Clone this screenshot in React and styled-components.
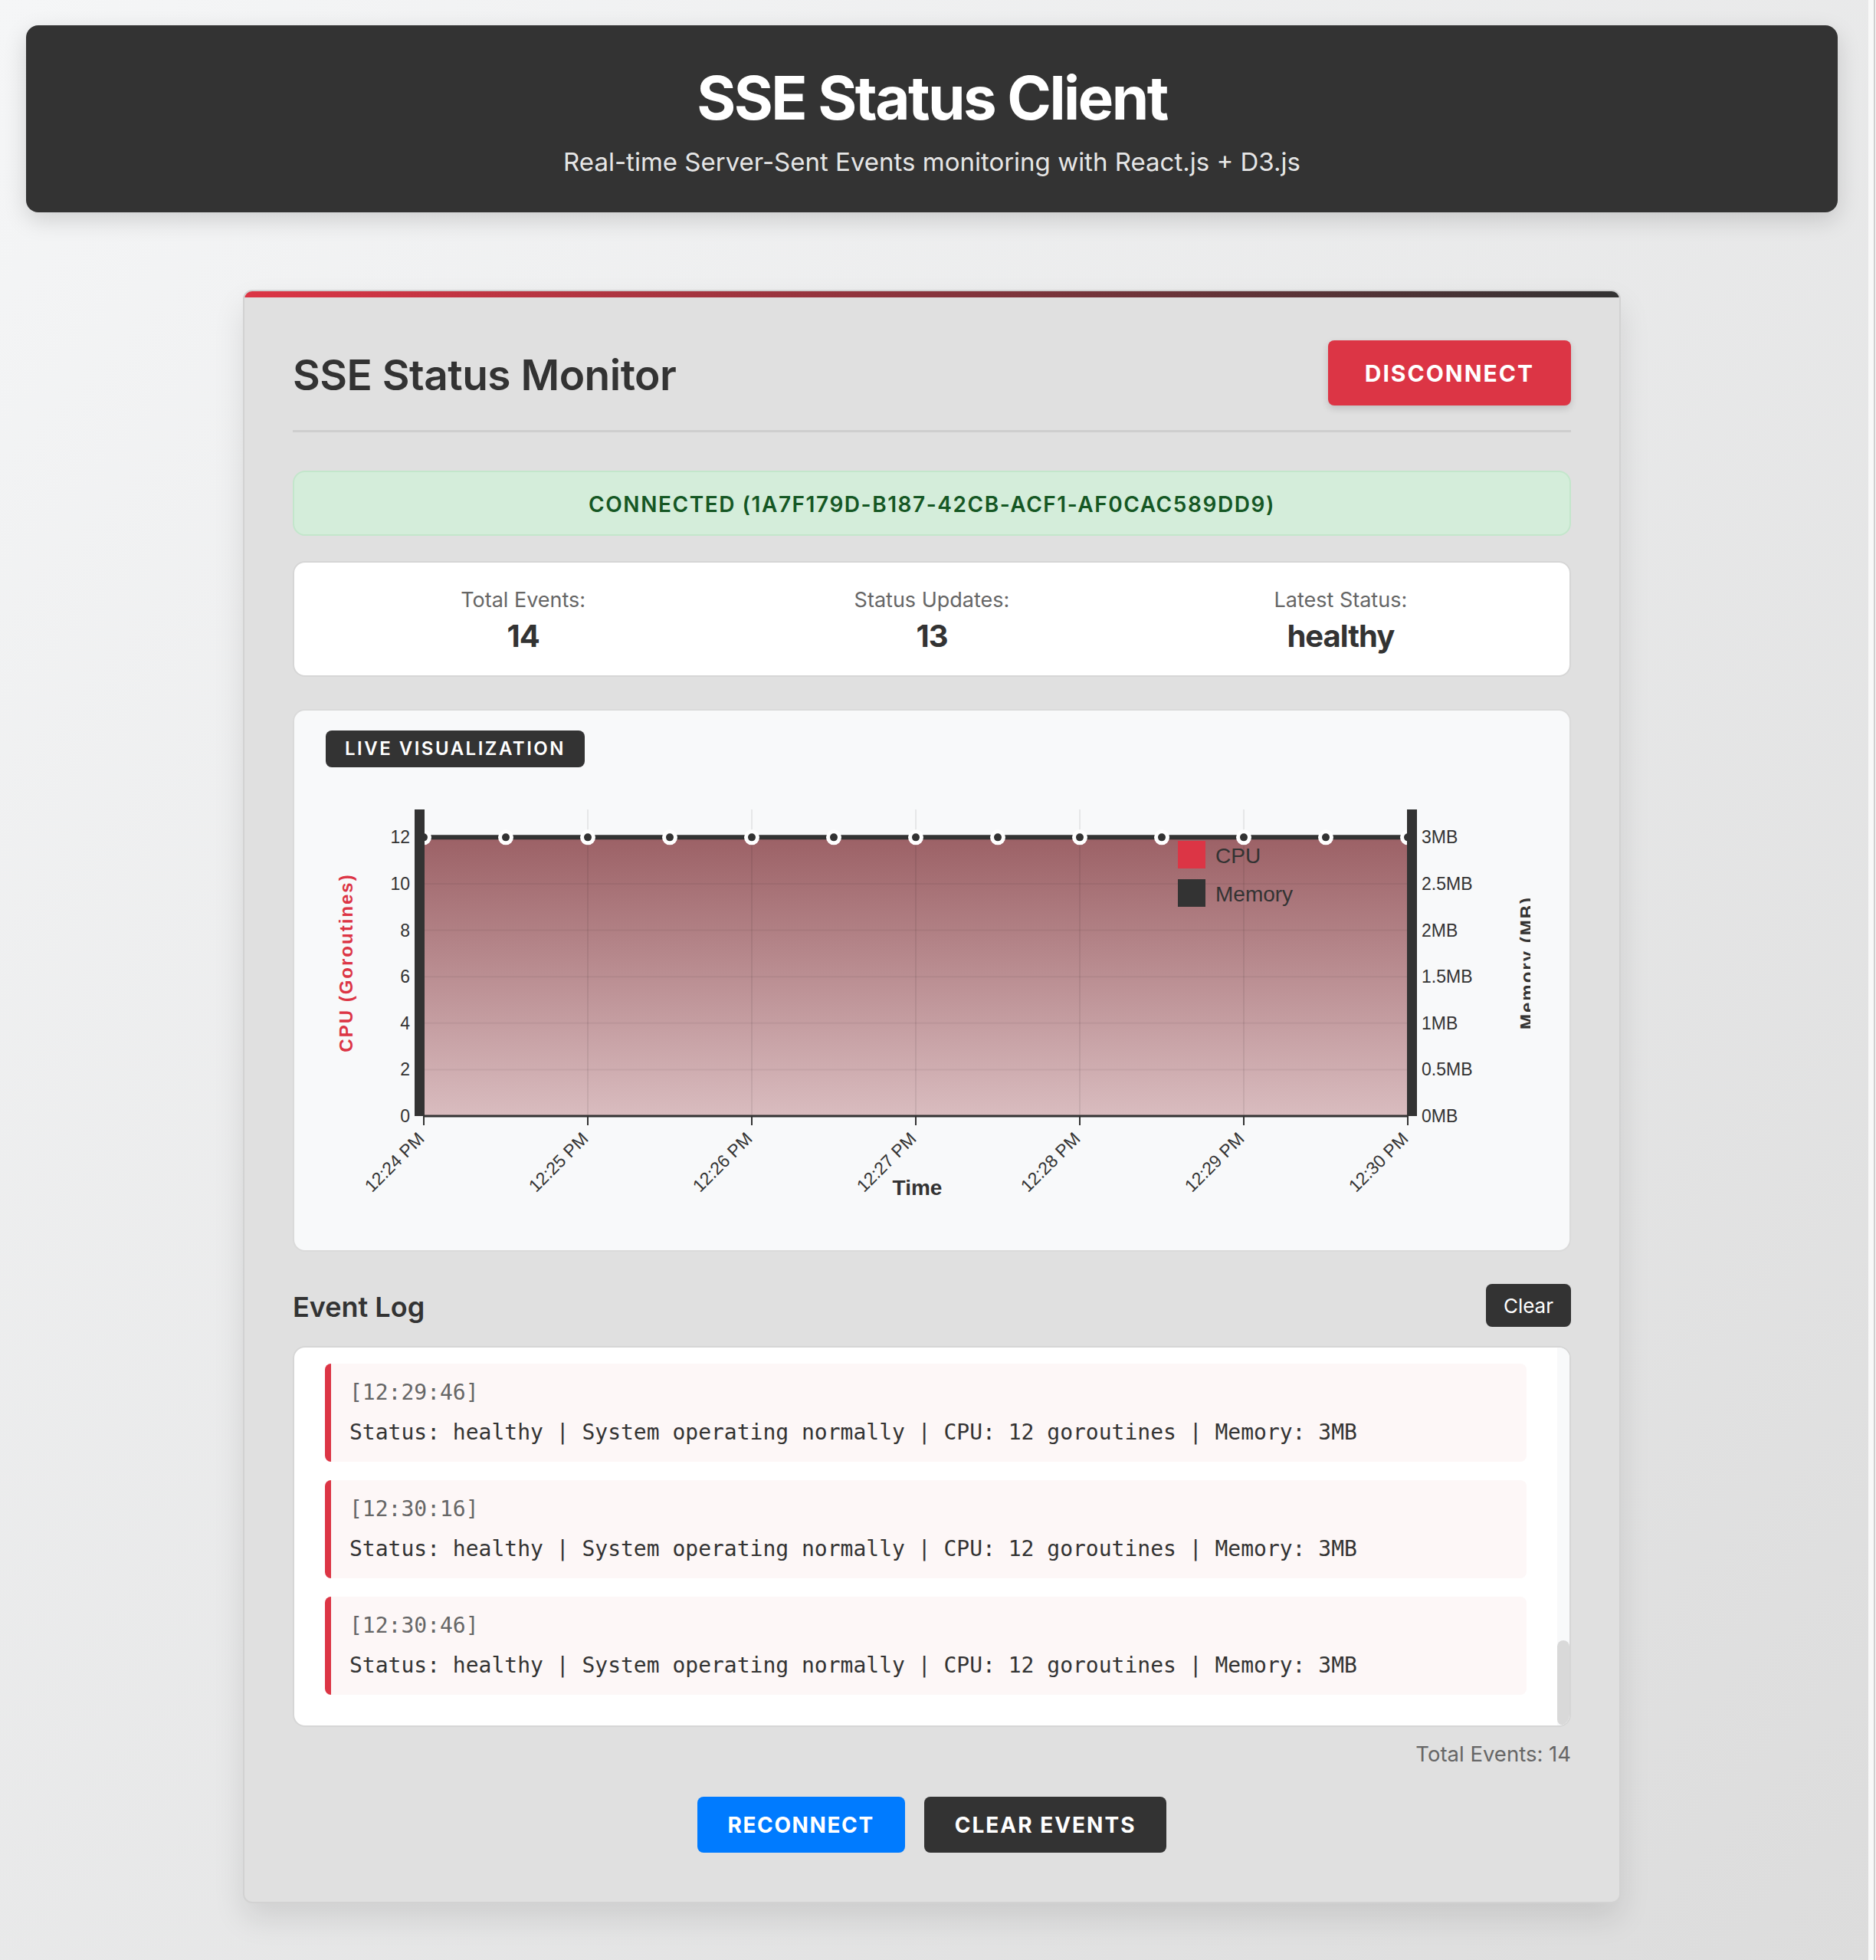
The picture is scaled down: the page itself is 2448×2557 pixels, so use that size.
import React, { useLayoutEffect, useRef, useState } from "react";
import styled, { createGlobalStyle } from "styled-components";

const GlobalStyle = createGlobalStyle`
  html, body { margin: 0; padding: 0; }
  body { font-family: Inter, "Noto Sans", "Liberation Sans", sans-serif; color: #333; }
  * { box-sizing: border-box; }
`;

const Shell = styled.div`
  display: flex;
  min-height: 100vh;
  background: linear-gradient(135deg, #f5f6f7 0%, #dcdcdc 100%);
`;

const Page = styled.div`
  flex: 1;
  padding: 33px 40px 40px 34px;
`;

const ScrollTrack = styled.div`
  width: 10px;
  background: linear-gradient(90deg, #f8f8f8 0 7px, #cfcfcf 7px 9px, #f8f8f8 9px);
`;

const Header = styled.header`
  background: #333;
  border-radius: 16px;
  padding: 47px 32px 42px;
  text-align: center;
  box-shadow: 0 10px 30px rgba(0, 0, 0, 0.15);
`;

const Title = styled.h1`
  margin: 0 0 11px;
  font-size: 78px;
  line-height: 96px;
  font-weight: 700;
  color: #fff;
  letter-spacing: -2.5px;
`;

const Subtitle = styled.p`
  margin: 0;
  font-size: 33px;
  line-height: 48px;
  color: rgba(255, 255, 255, 0.9);
`;

const Card = styled.main`
  width: 1798px;
  margin: 101px auto 0;
  border: 2px solid #d2d2d2;
  border-radius: 12px;
  background: linear-gradient(90deg, #dc3545, #333) top / 100% 8px no-repeat, #e0e0e0;
  padding: 64px 63px 64px;
  box-shadow: 0 20px 40px rgba(0, 0, 0, 0.1);
`;

const CardHeader = styled.div`
  display: flex;
  justify-content: space-between;
  align-items: center;
  padding-bottom: 32px;
  border-bottom: 3px solid #cecece;
  margin-bottom: 50px;
`;

const CardTitle = styled.h2`
  margin: 4px 0 0;
  font-size: 55px;
  line-height: 68px;
  font-weight: 600;
  letter-spacing: -0.5px;
  color: #333;
`;

const DisconnectButton = styled.button`
  height: 85px;
  padding: 0 48px;
  border: none;
  border-radius: 8px;
  background: #dc3545;
  color: #fff;
  font-family: inherit;
  font-size: 30px;
  font-weight: 700;
  letter-spacing: 2px;
  text-transform: uppercase;
  box-shadow: 0 4px 10px rgba(0, 0, 0, 0.15);
`;

const StatusBox = styled.div`
  height: 85px;
  display: flex;
  align-items: center;
  justify-content: center;
  padding-top: 3px;
  border: 2px solid #c3e6cb;
  background: #d4edda;
  border-radius: 16px;
  color: #155724;
  font-size: 28px;
  font-weight: 600;
  letter-spacing: 1.55px;
  text-transform: uppercase;
  margin-bottom: 33px;
`;

const Stats = styled.div`
  height: 151px;
  display: grid;
  grid-template-columns: repeat(3, 1fr);
  align-items: center;
  padding: 2px 32px 0;
  border: 2px solid #d6d6d6;
  background: #fff;
  border-radius: 16px;
  margin-bottom: 42px;
`;

const Stat = styled.div`
  text-align: center;
`;

const StatLabel = styled.div`
  font-size: 27px;
  line-height: 34px;
  color: #666;
`;

const StatValue = styled.div`
  margin-top: 8px;
  font-size: 40px;
  line-height: 44px;
  font-weight: 700;
  letter-spacing: -1px;
  color: #333;
`;

const ChartPanel = styled.section`
  border: 2px solid #dadada;
  border-radius: 16px;
  background: #f8f9fa;
  padding: 26px 39px 35px 41px;
  display: flex;
  flex-direction: column;
  align-items: flex-start;
`;

const Badge = styled.div`
  height: 48px;
  padding: 0 25px;
  background: #333;
  color: #fff;
  border-radius: 8px;
  font-size: 24px;
  line-height: 48px;
  font-weight: 600;
  letter-spacing: 2.5px;
  text-transform: uppercase;
`;

const ChartSvg = styled.svg`
  display: block;
  margin-top: 15px;
  overflow: hidden;
  font-family: "Liberation Sans", Arial, sans-serif;
`;

const LogHeader = styled.div`
  display: flex;
  justify-content: space-between;
  align-items: center;
  margin: 42px 0 25px;
`;

const LogTitle = styled.h3`
  margin: 4px 0 0;
  font-size: 36px;
  line-height: 44px;
  font-weight: 600;
  color: #333;
`;

const ClearButton = styled.button`
  height: 56px;
  padding: 0 23px;
  border: none;
  border-radius: 8px;
  background: #333;
  color: #fff;
  font-family: inherit;
  font-size: 26px;
`;

const LogFrame = styled.div`
  height: 497px;
  display: flex;
  overflow: hidden;
  border: 2px solid #d6d6d6;
  border-radius: 16px;
  background: #fff;
`;

const LogScroll = styled.div`
  flex: 1;
  overflow-y: auto;
  padding: 40px 40px 0;
  scrollbar-width: none;
  &::-webkit-scrollbar { display: none; }
`;

const ScrollRail = styled.div`
  width: 16px;
  flex: none;
  background: #f8f9fa;
  display: flex;
  flex-direction: column;
  justify-content: flex-end;
`;

const ScrollThumb = styled.div`
  border-radius: 8px;
  background: #d9d9d9;
`;

const LogInner = styled.div`
  padding-bottom: 40px;
`;

const Entry = styled.div`
  background: #fdf7f7;
  border-left: 8px solid #dc3545;
  border-radius: 8px;
  padding: 16px 24px;
  margin-bottom: 24px;
  font-family: "DejaVu Sans Mono", "Liberation Mono", monospace;
  font-size: 28px;
  line-height: 44px;

  &:last-child { margin-bottom: 0; }
`;

const EntryTime = styled.div`
  color: #666;
  margin-bottom: 8px;
`;

const EntryMsg = styled.div`
  color: #333;
  white-space: pre;
`;

const Footer = styled.div`
  margin-top: 16px;
  text-align: right;
  font-size: 27.5px;
  line-height: 39px;
  color: #666;
`;

const ButtonRow = styled.div`
  display: flex;
  justify-content: center;
  gap: 25px;
  margin-top: 36px;
`;

const ActionButton = styled.button`
  height: 73px;
  padding: 0 40px;
  border: none;
  border-radius: 8px;
  background: ${(p) => (p.$variant === "primary" ? "#007bff" : "#333")};
  color: #fff;
  font-family: inherit;
  font-size: 28px;
  font-weight: 700;
  letter-spacing: ${(p) => (p.$variant === "primary" ? "1.6px" : "2px")};
  text-transform: uppercase;
`;

function fmt(totalSec) {
  const h = Math.floor(totalSec / 3600);
  const m = Math.floor((totalSec % 3600) / 60);
  const s = totalSec % 60;
  const p = (n) => String(n).padStart(2, "0");
  return `${p(h)}:${p(m)}:${p(s)}`;
}

const STATUS_MSG =
  "Status: healthy | System operating normally | CPU: 12 goroutines | Memory: 3MB";

const events = [
  { time: "12:24:40", msg: "Connected | Client ID: 1A7F179D-B187-42CB-ACF1-AF0CAC589DD9" },
  ...Array.from({ length: 13 }, (_, i) => ({
    time: fmt(12 * 3600 + 24 * 60 + 46 + i * 30),
    msg: STATUS_MSG,
  })),
];

// chart geometry (svg local px)
const W = 1572;
const H = 580;
const PL = 128;
const PR = 1412;
const PT = 40;
const PB = 440;
const yOf = (v) => PB - (v * (PB - PT)) / 13.2;
const pointsX = Array.from({ length: 13 }, (_, i) => PL + (i * (PR - PL)) / 12);
const minuteX = Array.from({ length: 7 }, (_, i) => PL + (i * (PR - PL)) / 6);
const minuteLabels = ["12:24 PM", "12:25 PM", "12:26 PM", "12:27 PM", "12:28 PM", "12:29 PM", "12:30 PM"];
const yTicks = [0, 2, 4, 6, 8, 10, 12];
const memLabels = ["0MB", "0.5MB", "1MB", "1.5MB", "2MB", "2.5MB", "3MB"];

function Chart() {
  const top = yOf(12);
  return (
    <ChartSvg width={W} height={H} viewBox={`0 0 ${W} ${H}`}>
      <defs>
        <linearGradient id="areaGrad" x1="0" y1="0" x2="0" y2="1">
          <stop offset="0" stopColor="#9c6166" />
          <stop offset="1" stopColor="#d9bcbf" />
        </linearGradient>
      </defs>
      <path d={`M${PL},${PB}L${PL},${top}L${PR},${top}L${PR},${PB}Z`} fill="url(#areaGrad)" />
      {minuteX.map((x) => (
        <line key={`gx${x}`} x1={x} x2={x} y1={PT} y2={PB} stroke="#000" strokeOpacity="0.07" strokeWidth="2" />
      ))}
      {yTicks.map((v) => (
        <line key={`gy${v}`} x1={PL} x2={PR} y1={yOf(v)} y2={yOf(v)} stroke="#000" strokeOpacity="0.05" strokeWidth="2" />
      ))}
      <line x1={PL} x2={PR} y1={top} y2={top} stroke="#333" strokeWidth="6" />
      {pointsX.map((x) => (
        <circle key={`p${x}`} cx={x} cy={top} r="7.5" fill="#333" stroke="#fff" strokeWidth="5" />
      ))}
      <line x1={PL} x2={PR} y1={PB} y2={PB} stroke="#333" strokeWidth="3" />
      {minuteX.map((x) => (
        <line key={`t${x}`} x1={x} x2={x} y1={PB} y2={PB + 12} stroke="#333" strokeWidth="2" />
      ))}
      <rect x={PL - 12} y={PT} width="13" height={PB - PT} fill="#333" />
      <rect x={PR - 1} y={PT} width="13" height={PB - PT} fill="#333" />
      {yTicks.map((v) => (
        <text key={`yl${v}`} x={PL - 18} y={yOf(v)} dy="0.35em" textAnchor="end" fontSize="23" fill="#333">
          {v}
        </text>
      ))}
      {memLabels.map((l, i) => (
        <text key={`ml${l}`} x={PR + 18} y={yOf(i * 2)} dy="0.35em" fontSize="23" fill="#333">
          {l}
        </text>
      ))}
      {minuteX.map((x, i) => (
        <text
          key={`xl${x}`}
          transform={`translate(${x + 2},${PB + 31}) rotate(-45)`}
          textAnchor="end"
          fontSize="23"
          fill="#333"
        >
          {minuteLabels[i]}
        </text>
      ))}
      <text x={(PL + PR) / 2 + 2} y={543} textAnchor="middle" fontSize="28" fontWeight="700" fill="#333">
        Time
      </text>
      <text
        transform={`translate(35,${(PT + PB) / 2}) rotate(-90)`}
        textAnchor="middle"
        fontSize="24"
        fontWeight="700"
        letterSpacing="2"
        fill="#dc3545"
      >
        CPU (Goroutines)
      </text>
      <text
        transform={`translate(1576,${(PT + PB) / 2}) rotate(-90)`}
        textAnchor="middle"
        fontSize="24"
        fontWeight="700"
        letterSpacing="2"
        fill="#333"
      >
        Memory (MB)
      </text>
      <rect x="1112" y="81" width="36" height="36" fill="#dc3545" />
      <text x="1161" y="110" fontSize="28" fill="#333">CPU</text>
      <rect x="1112" y="131" width="36" height="36" fill="#333" />
      <text x="1161" y="160" fontSize="28" fill="#333">Memory</text>
    </ChartSvg>
  );
}

export default function App() {
  const listRef = useRef(null);
  const [thumb, setThumb] = useState(111);

  useLayoutEffect(() => {
    const el = listRef.current;
    if (!el) return;
    el.scrollTop = el.scrollHeight;
    const h = el.clientHeight;
    setThumb(Math.round((h * h) / el.scrollHeight));
  }, []);

  return (
    <>
      <GlobalStyle />
      <Shell>
        <Page>
          <Header>
            <Title>SSE Status Client</Title>
            <Subtitle>Real-time Server-Sent Events monitoring with React.js + D3.js</Subtitle>
          </Header>
          <Card>
            <CardHeader>
              <CardTitle>SSE Status Monitor</CardTitle>
              <DisconnectButton>Disconnect</DisconnectButton>
            </CardHeader>
            <StatusBox>Connected (1A7F179D-B187-42CB-ACF1-AF0CAC589DD9)</StatusBox>
            <Stats>
              <Stat>
                <StatLabel>Total Events:</StatLabel>
                <StatValue>14</StatValue>
              </Stat>
              <Stat>
                <StatLabel>Status Updates:</StatLabel>
                <StatValue>13</StatValue>
              </Stat>
              <Stat>
                <StatLabel>Latest Status:</StatLabel>
                <StatValue>healthy</StatValue>
              </Stat>
            </Stats>
            <ChartPanel>
              <Badge>Live Visualization</Badge>
              <Chart />
            </ChartPanel>
            <LogHeader>
              <LogTitle>Event Log</LogTitle>
              <ClearButton>Clear</ClearButton>
            </LogHeader>
            <LogFrame>
              <LogScroll ref={listRef}>
                <LogInner>
                  {events.map((e, i) => (
                    <Entry key={i}>
                      <EntryTime>[{e.time}]</EntryTime>
                      <EntryMsg>{e.msg}</EntryMsg>
                    </Entry>
                  ))}
                </LogInner>
              </LogScroll>
              <ScrollRail>
                <ScrollThumb style={{ height: thumb }} />
              </ScrollRail>
            </LogFrame>
            <Footer>Total Events: 14</Footer>
            <ButtonRow>
              <ActionButton $variant="primary">Reconnect</ActionButton>
              <ActionButton>Clear Events</ActionButton>
            </ButtonRow>
          </Card>
        </Page>
        <ScrollTrack />
      </Shell>
    </>
  );
}
